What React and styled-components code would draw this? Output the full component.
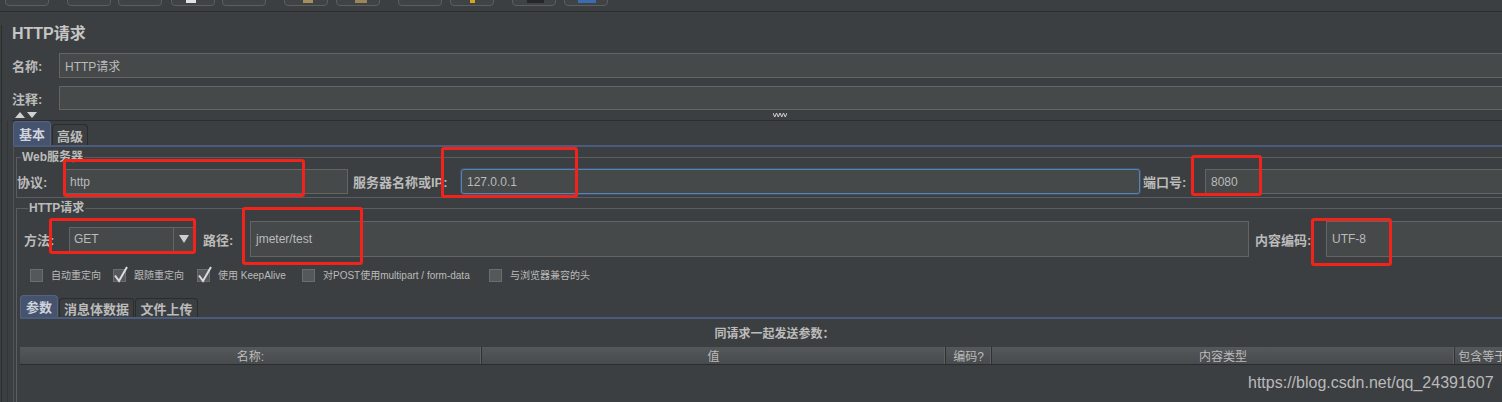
import React from "react";
import styled, { createGlobalStyle } from "styled-components";

const COLORS = {
  bg: "#3c3f41",
  field: "#45494a",
  fieldBorder: "#646464",
  text: "#bbbbbb",
  line: "#2b2d2e",
  etched: "#505355",
  blue: "#4b5b7c",
  tabActive: "#46536e",
  red: "#f2231b",
};

const GlobalStyle = createGlobalStyle`
  html, body {
    margin: 0;
    padding: 0;
    overflow: hidden;
    background: ${COLORS.bg};
  }
  body {
    font-family: "Liberation Sans", "Noto Sans CJK SC", sans-serif;
    color: ${COLORS.text};
  }
`;

const Screen = styled.div`
  position: relative;
  width: 1530px;
  height: 402px;
  overflow: hidden;
  background: ${COLORS.bg};
`;

const Toolbar = styled.div`
  display: flex;
  align-items: flex-end;
  height: 11px;
  overflow: hidden;
  border-bottom: 1px solid ${COLORS.line};
`;

const ToolButton = styled.div`
  flex: none;
  display: flex;
  align-items: flex-end;
  box-sizing: border-box;
  width: 44px;
  height: 24px;
  margin-left: ${(p) => p.$gap}px;
  margin-bottom: 5px;
  border: 1px solid #5c5f62;
  border-radius: 4px;
  background: #404346;
`;

const IconStub = styled.span`
  width: ${(p) => p.$w}px;
  height: 3px;
  margin: 0 0 2px ${(p) => p.$x}px;
  background: ${(p) => p.$color};
`;

const Main = styled.div`
  margin-left: 1px;
  padding-left: 10px;
  border-left: 1px solid ${COLORS.line};
`;

const Title = styled.h1`
  margin: 13px 0 0;
  font-size: 16px;
  line-height: 18px;
  font-weight: bold;
  color: #c6c6c6;
`;

const Row = styled.div`
  display: flex;
  align-items: center;
  height: ${(p) => p.$h}px;
  margin-top: ${(p) => p.$mt || 0}px;
`;

const Label = styled.span`
  flex: none;
  width: ${(p) => p.$w}px;
  margin-left: ${(p) => p.$ml || 0}px;
  font-size: 13px;
  font-weight: bold;
  color: ${COLORS.text};
  white-space: nowrap;
`;

const Field = styled.div`
  flex: ${(p) => (p.$w ? "none" : "1")};
  width: ${(p) => (p.$w ? `${p.$w}px` : "auto")};
  height: 100%;
  box-sizing: border-box;
  display: flex;
  align-items: center;
  padding-left: 5px;
  background: ${COLORS.field};
  border: 1px solid ${(p) => (p.$focus ? "#5b81ae" : COLORS.fieldBorder)};
  border-radius: ${(p) => (p.$focus ? "3px" : "0")};
  box-shadow: ${(p) => (p.$focus ? "0 0 0 1px #3a5472" : "none")};
  font-size: 12px;
  color: ${COLORS.text};
  white-space: nowrap;
`;

const Splitter = styled.div`
  display: flex;
  align-items: center;
  height: 10px;
  padding-left: 3px;
  border-bottom: 1px solid ${COLORS.line};
`;

const Grip = styled.svg`
  margin-left: 736px;
`;

const TabArea = styled.div`
  margin-left: -5px;
  padding-left: 5px;
  border-left: 1px solid #333638;
`;

const TabStrip = styled.div`
  display: flex;
  align-items: flex-end;
  gap: 1px;
  height: ${(p) => p.$h}px;
  margin-left: ${(p) => p.$ml || 0}px;
  margin-top: ${(p) => p.$mt || 0}px;
`;

const Tab = styled.div`
  flex: none;
  box-sizing: border-box;
  display: flex;
  align-items: center;
  justify-content: center;
  width: ${(p) => p.$w}px;
  height: ${(p) => (p.$active ? "100%" : "calc(100% - 3px)")};
  border: 1px solid ${(p) => (p.$active ? "#56637f" : "#2a2c2d")};
  border-bottom: none;
  border-radius: 4px 4px 0 0;
  background: ${(p) => (p.$active ? COLORS.tabActive : COLORS.bg)};
  font-size: 13px;
  font-weight: bold;
  color: ${(p) => (p.$active ? "#d0d4dc" : COLORS.text)};
`;

const TabBody = styled.div`
  padding-left: 2px;
  border-top: 2px solid ${COLORS.blue};
  border-left: 1px solid ${COLORS.etched};
`;

const Group = styled.fieldset`
  margin: 4px 0 0;
  min-width: 0;
  padding: ${(p) => p.$pad};
  border: 1px solid #5b5e60;
`;

const Legend = styled.legend`
  margin-left: 4px;
  padding: 0 1px;
  font-size: 12px;
  line-height: 12px;
  font-weight: bold;
  color: ${COLORS.text};
`;

const Combo = styled.div`
  flex: none;
  display: flex;
  box-sizing: border-box;
  width: 125px;
  height: 25px;
  background: ${COLORS.field};
  border: 1px solid ${COLORS.fieldBorder};
  font-size: 12px;
  color: ${COLORS.text};
`;

const ComboValue = styled.div`
  flex: 1;
  display: flex;
  align-items: center;
  padding-left: 4px;
`;

const ComboArrow = styled.div`
  flex: none;
  width: 19px;
  display: flex;
  align-items: center;
  justify-content: center;
  border-left: 1px solid ${COLORS.fieldBorder};
`;

const Checks = styled.div`
  display: flex;
  height: 17px;
  margin-top: 9px;
  padding-left: 6px;
`;

const CheckItem = styled.div`
  flex: none;
  display: flex;
  align-items: flex-end;
  width: ${(p) => (p.$w ? `${p.$w}px` : "auto")};
`;

const CheckText = styled.span`
  margin-left: 6px;
  font-size: 10px;
  line-height: 14px;
  color: ${COLORS.text};
  white-space: nowrap;
`;

const ParamPanel = styled.div`
  margin-left: -4px;
  border-top: 2px solid ${COLORS.blue};
  height: 120px;
`;

const Caption = styled.div`
  padding-top: 8px;
  text-align: center;
  font-size: 12px;
  line-height: 14px;
  font-weight: bold;
  color: ${COLORS.text};
`;

const TableHead = styled.div`
  display: flex;
  height: 17px;
  margin-top: 6px;
  background: linear-gradient(#55585a, #484b4d);
  border-bottom: 1px solid #2a2c2d;
`;

const HeadCell = styled.div`
  flex: none;
  box-sizing: border-box;
  width: ${(p) => p.$w}px;
  display: flex;
  align-items: center;
  justify-content: center;
  border-right: 1px solid #2f3133;
  box-shadow: inset -1px 0 0 #5e6163;
  font-size: 12px;
  color: ${COLORS.text};
  white-space: nowrap;
  overflow: hidden;
`;

const Mark = styled.div`
  position: absolute;
  left: ${(p) => p.$x}px;
  top: ${(p) => p.$y}px;
  width: ${(p) => p.$w}px;
  height: ${(p) => p.$h}px;
  box-sizing: border-box;
  border: 3px solid ${COLORS.red};
  border-radius: 3px;
`;

const Watermark = styled.div`
  position: absolute;
  left: 1248px;
  top: 374px;
  font-size: 16px;
  line-height: 18px;
  color: #b9babb;
  white-space: nowrap;
`;

const buttons = [
  { gap: 5 },
  { gap: 18 },
  { gap: 7 },
  { gap: 9, icon: { x: 14, w: 10, color: "#e2e2e2" } },
  { gap: 7 },
  { gap: 18, icon: { x: 18, w: 10, color: "#a58d5c" } },
  { gap: 8, icon: { x: 18, w: 12, color: "#9c8558" } },
  { gap: 18 },
  { gap: 8, icon: { x: 19, w: 5, color: "#d7a51a" } },
  { gap: 18, icon: { x: 14, w: 17, color: "#252627" } },
  { gap: 8, icon: { x: 13, w: 18, color: "#3a6db0" } },
];

const checks = [
  { label: "自动重定向", checked: false, w: 83 },
  { label: "跟随重定向", checked: true, w: 84 },
  { label: "使用 KeepAlive", checked: true, w: 105 },
  { label: "对POST使用multipart / form-data", checked: false, w: 187 },
  { label: "与浏览器兼容的头", checked: false },
];

const columns = [
  { label: "名称:", w: 462 },
  { label: "值", w: 464 },
  { label: "编码?", w: 46 },
  { label: "内容类型", w: 463 },
  { label: "包含等于?", w: 62 },
];

const marks = [
  { x: 63, y: 159, w: 242, h: 38 },
  { x: 441, y: 147, w: 137, h: 51 },
  { x: 1191, y: 155, w: 71, h: 41 },
  { x: 49, y: 218, w: 147, h: 36 },
  { x: 242, y: 207, w: 121, h: 58 },
  { x: 1311, y: 218, w: 81, h: 48 },
];

const CheckBox = ({ checked }) => (
  <svg width="15" height="17" viewBox="0 0 15 17">
    <rect x="0.5" y="3.5" width="12" height="12" fill="#55585a" stroke="#6a6d6f" />
    {checked && (
      <path d="M2 9.5 L6 15 L14 1" fill="none" stroke="#dcdcdc" strokeWidth="2" />
    )}
  </svg>
);

const App = () => {
  return (
    <>
      <GlobalStyle />
      <Screen>
        <Toolbar>
          {buttons.map((b, i) => (
            <ToolButton key={i} $gap={b.gap}>
              {b.icon && <IconStub $x={b.icon.x} $w={b.icon.w} $color={b.icon.color} />}
            </ToolButton>
          ))}
        </Toolbar>
        <Main>
          <Title>HTTP请求</Title>
          <Row $h={25} $mt={10}>
            <Label $w={47}>名称:</Label>
            <Field>HTTP请求</Field>
          </Row>
          <Row $h={24} $mt={8}>
            <Label $w={47}>注释:</Label>
            <Field />
          </Row>
          <Splitter>
            <svg width="22" height="6" viewBox="0 0 22 6">
              <polygon points="0,6 5,0 10,6" fill="#d2d2d2" />
              <polygon points="12,0 22,0 17,6" fill="#d2d2d2" />
            </svg>
            <Grip width="14" height="4" viewBox="0 0 14 4">
              <polyline points="0,0 1.75,4 3.5,0 5.25,4 7,0 8.75,4 10.5,0 12.25,4 14,0" fill="none" stroke="#cfcfcf" strokeWidth="1" />
            </Grip>
          </Splitter>
          <TabArea>
            <TabStrip $h={24}>
              <Tab $w={38} $active>基本</Tab>
              <Tab $w={36}>高级</Tab>
            </TabStrip>
            <TabBody>
              <Group $pad="6px 0 3px 0">
                <Legend>Web服务器</Legend>
                <Row $h={25}>
                  <Label $w={47}>协议:</Label>
                  <Field $w={284}>http</Field>
                  <Label $w={108} $ml={5}>服务器名称或IP:</Label>
                  <Field $w={679} $focus>127.0.0.1</Field>
                  <Label $w={62} $ml={3}>端口号:</Label>
                  <Field>8080</Field>
                </Row>
              </Group>
              <Group $pad="7px 0 120px 7px">
                <Legend>HTTP请求</Legend>
                <Row $h={36}>
                  <Label $w={45}>方法:</Label>
                  <Combo>
                    <ComboValue>GET</ComboValue>
                    <ComboArrow>
                      <svg width="10" height="8" viewBox="0 0 10 8">
                        <polygon points="0,0 10,0 5,8" fill="#cfcfcf" />
                      </svg>
                    </ComboArrow>
                  </Combo>
                  <Label $w={47} $ml={9}>路径:</Label>
                  <Field $w={999}>jmeter/test</Field>
                  <Label $w={71} $ml={6}>内容编码:</Label>
                  <Field>UTF-8</Field>
                </Row>
                <Checks>
                  {checks.map((c) => (
                    <CheckItem key={c.label} $w={c.w}>
                      <CheckBox checked={c.checked} />
                      <CheckText>{c.label}</CheckText>
                    </CheckItem>
                  ))}
                </Checks>
                <TabStrip $h={22} $ml={-4} $mt={12}>
                  <Tab $w={38} $active>参数</Tab>
                  <Tab $w={75}>消息体数据</Tab>
                  <Tab $w={63}>文件上传</Tab>
                </TabStrip>
                <ParamPanel>
                  <Caption>同请求一起发送参数：</Caption>
                  <TableHead>
                    {columns.map((c) => (
                      <HeadCell key={c.label} $w={c.w}>{c.label}</HeadCell>
                    ))}
                  </TableHead>
                </ParamPanel>
              </Group>
            </TabBody>
          </TabArea>
        </Main>
        {marks.map((m, i) => (
          <Mark key={i} $x={m.x} $y={m.y} $w={m.w} $h={m.h} />
        ))}
        <Watermark>https://blog.csdn.net/qq_24391607</Watermark>
      </Screen>
    </>
  );
};

export default App;
